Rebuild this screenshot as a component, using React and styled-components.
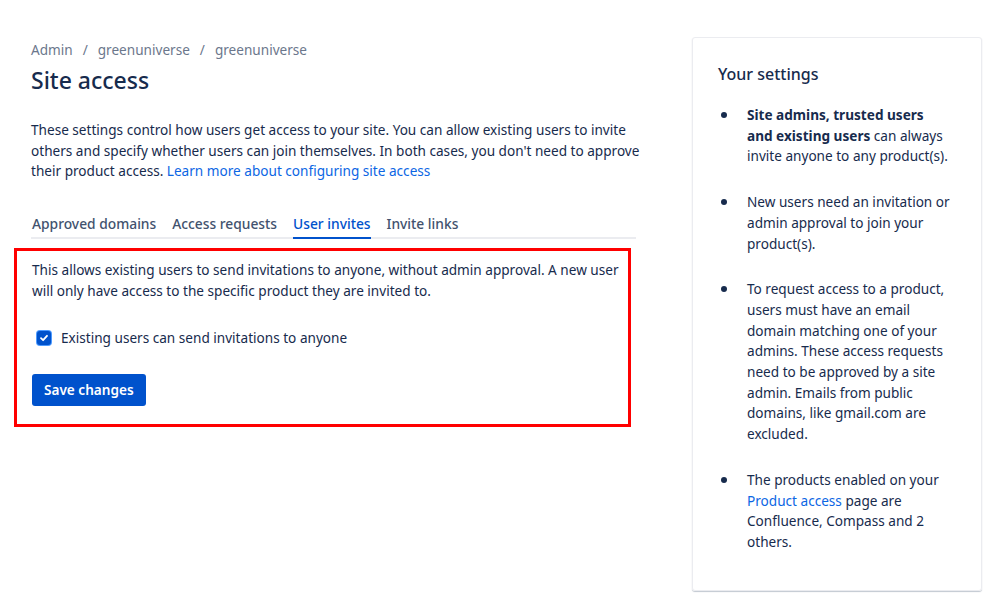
import React from "react";
import styled, { createGlobalStyle } from "styled-components";

const Global = createGlobalStyle`
  html, body { margin: 0; padding: 0; background: #fff; }
  body { font-family: "Noto Sans", "Open Sans", sans-serif; color: #172b4d; }
  * { box-sizing: border-box; }
`;

const Page = styled.div`
  display: flex;
  align-items: flex-start;
  padding: 37px 17px 0 31px;
  gap: 56px;
  width: 999px;
  height: 602px;
`;

const Main = styled.div`
  width: 605px;
  display: flex;
  flex-direction: column;
  padding-top: 3px;
`;

const Crumbs = styled.nav`
  display: flex;
  gap: 10px;
  font-size: 13.6px;
  line-height: 20px;
  color: #6b778c;
`;

const Title = styled.h1`
  margin: 4px 0 0;
  font-size: 23px;
  line-height: 32px;
  font-weight: 500;
  color: #172b4d;
`;

const Intro = styled.p`
  margin: 24px -10px 0 0;
  font-size: 13.6px;
  line-height: 20.5px;
  color: #172b4d;
`;

const Link = styled.a`
  color: #0c66e4;
  text-decoration: none;
`;

const Tabs = styled.div`
  display: flex;
  gap: 16px;
  margin-top: 32px;
  border-bottom: 2px solid #ebecf0;
  padding-left: 1px;
`;

const Tab = styled.div`
  font-size: 13.8px;
  line-height: 20px;
  font-weight: 500;
  padding-bottom: 5px;
  color: ${p => (p.$active ? "#0052cc" : "#42526e")};
  box-shadow: ${p => (p.$active ? "inset 0 -2px 0 #0052cc" : "none")};
  margin-bottom: -2px;
`;

const Highlight = styled.section`
  margin: 9px 0 0 -17px;
  width: 617px;
  border: 3px solid #ff0000;
  padding: 8px 6px 18px 15px;
  display: flex;
  flex-direction: column;
  align-items: flex-start;
`;

const Info = styled.p`
  margin: 0;
  font-size: 13.6px;
  line-height: 21px;
  color: #172b4d;
`;

const CheckRow = styled.label`
  display: flex;
  align-items: center;
  gap: 10px;
  margin: 27px 0 0 5px;
  font-size: 13.6px;
  line-height: 20px;
  color: #172b4d;
`;

const Box = styled.span`
  width: 14px;
  height: 14px;
  border-radius: 3px;
  background: #0052cc;
  display: inline-flex;
  align-items: center;
  justify-content: center;
  box-shadow: 0 0 0 1px #4c9aff;
`;

const Button = styled.button`
  margin-top: 26px;
  height: 32px;
  padding: 0 12px;
  border: none;
  border-radius: 3px;
  background: #0052cc;
  color: #fff;
  font-family: inherit;
  font-size: 13.6px;
  font-weight: 600;
`;

const Panel = styled.aside`
  width: 290px;
  height: 554px;
  border: 1px solid #ebecf0;
  border-radius: 3px;
  box-shadow: 0 1px 1px rgba(9, 30, 66, 0.25);
  padding: 24px 31px 0 25px;
`;

const PanelTitle = styled.h2`
  margin: 0;
  font-size: 16px;
  line-height: 24px;
  font-weight: 500;
  color: #172b4d;
`;

const List = styled.ul`
  margin: 18px 0 0;
  padding: 0 0 0 21px;
  display: flex;
  flex-direction: column;
  gap: 24px;
  font-size: 13.6px;
  line-height: 20.7px;
  color: #172b4d;
`;

const Item = styled.li`
  padding-left: 8px;
  &::marker { font-size: 16px; color: #172b4d; }
`;

export default function App() {
  return (
    <>
      <Global />
      <Page>
        <Main>
          <Crumbs>
            <span>Admin</span>
            <span>/</span>
            <span>greenuniverse</span>
            <span>/</span>
            <span>greenuniverse</span>
          </Crumbs>
          <Title>Site access</Title>
          <Intro>
            These settings control how users get access to your site. You can allow existing users to invite
            others and specify whether users can join themselves. In both cases, you don't need to approve
            their product access. <Link href="#">Learn more about configuring site access</Link>
          </Intro>
          <Tabs>
            <Tab>Approved domains</Tab>
            <Tab>Access requests</Tab>
            <Tab $active>User invites</Tab>
            <Tab>Invite links</Tab>
          </Tabs>
          <Highlight>
            <Info>
              This allows existing users to send invitations to anyone, without admin approval. A new user
              will only have access to the specific product they are invited to.
            </Info>
            <CheckRow>
              <Box>
                <svg width="10" height="10" viewBox="0 0 10 10">
                  <path d="M2 5.2 L4.1 7.2 L8 2.8" fill="none" stroke="#fff" strokeWidth="1.8" strokeLinecap="round" strokeLinejoin="round" />
                </svg>
              </Box>
              Existing users can send invitations to anyone
            </CheckRow>
            <Button>Save changes</Button>
          </Highlight>
        </Main>
        <Panel>
          <PanelTitle>Your settings</PanelTitle>
          <List>
            <Item><b>Site admins, trusted users and existing users</b> can always invite anyone to any product(s).</Item>
            <Item>New users need an invitation or admin approval to join your product(s).</Item>
            <Item>To request access to a product, users must have an email domain matching one of your admins. These access requests need to be approved by a site admin. Emails from public domains, like gmail.com are excluded.</Item>
            <Item>The products enabled on your <Link href="#">Product access</Link> page are Confluence, Compass and 2 others.</Item>
          </List>
        </Panel>
      </Page>
    </>
  );
}
